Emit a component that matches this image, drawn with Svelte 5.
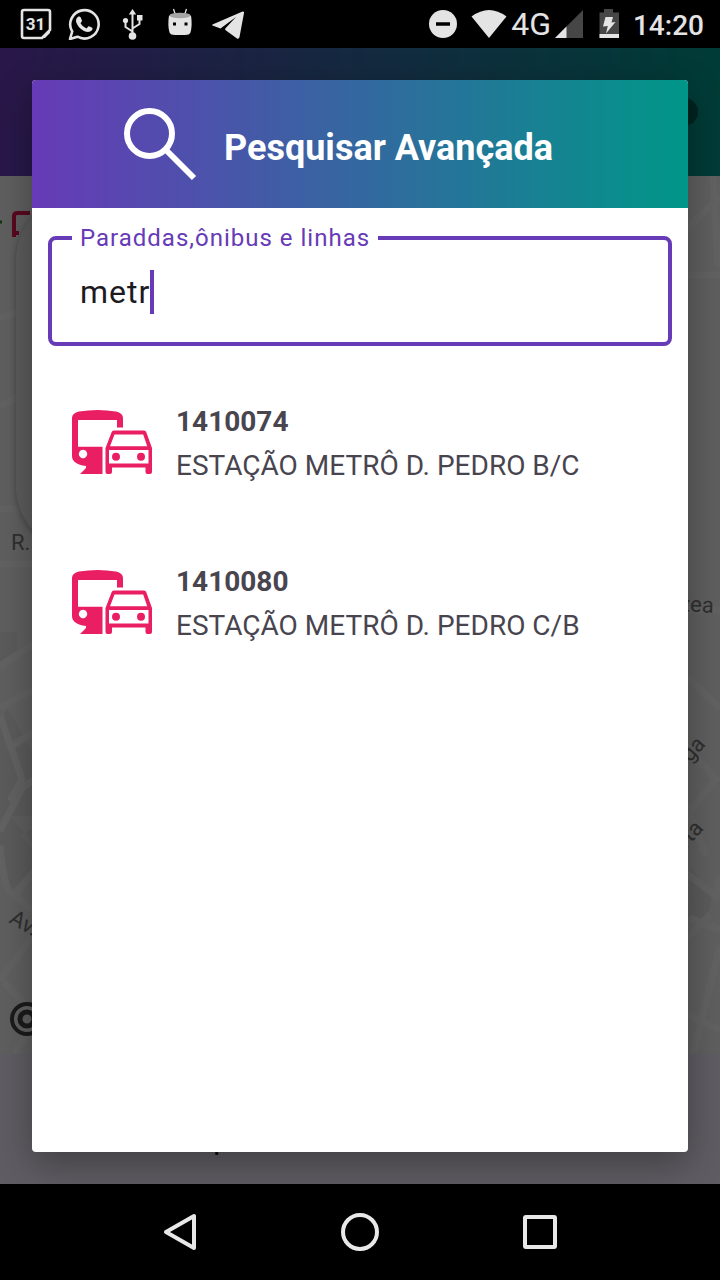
<script>
  let query = $state('metr');
  const stops = [
    { code: '1410074', name: 'ESTAÇÃO METRÔ D. PEDRO B/C' },
    { code: '1410080', name: 'ESTAÇÃO METRÔ D. PEDRO C/B' }
  ];
</script>

<div class="screen">
  <header class="status">
    <div class="notices">
      <svg viewBox="0 0 32 32"><path d="M4 2H28Q30 2 30 4V22L22 30H4Q2 30 2 28V4Q2 2 4 2Z" fill="none" stroke="#e4e4e4" stroke-width="2.6"/><path d="M22 30 30 22V25L25 30Z" fill="#e4e4e4"/><text x="15.500" y="22" text-anchor="middle" class="day">31</text></svg>
      <svg viewBox="0 0 32 32"><path d="M2 31 4.200 23.500A14.200 14.200 0 1 1 9.500 28.700Z" fill="none" stroke="#e4e4e4" stroke-width="2.6" stroke-linejoin="round"/><path d="M10.500 8.500Q12 8 12.700 9.500L14 12.500Q14 13.500 12.500 15.200Q14.500 19 18.500 20.500L20.500 18.200Q21.300 17.800 24.200 19.700Q25 20.500 24 22.300Q21 25.500 16 23Q9.500 19.500 8 13.500Q7.800 10 10.500 8.500Z" fill="#e4e4e4"/></svg>
      <svg viewBox="0 0 32 32"><g fill="none" stroke="#e4e4e4" stroke-width="2"><path d="M16.500 28V5M16.500 23.500 9.500 19V13M16.500 20.500 23.500 16V11"/></g><g fill="#e4e4e4"><path d="M12.800 6.500 16.500 1 20.200 6.500ZM21 7h5.500v5.500H21Z"/><circle cx="9.500" cy="12.500" r="2.600"/><circle cx="16.500" cy="28" r="3.800"/></g></svg>
      <svg viewBox="0 0 32 32"><path d="M9.500 1 11.500 7M22.500 1 20.500 7" stroke="#e4e4e4" stroke-width="1.300"/><path d="M5 7.500Q16 11 27 7.500Q28.500 17 26.500 24.500Q25.500 27 21 27H11Q6.500 27 5.500 24.500Q3.500 17 5 7.500Z" fill="#e4e4e4"/><ellipse cx="16" cy="7.500" rx="10.500" ry="2.700" fill="#a5a5a5"/><path d="M9 14.500h3v3H9ZM20.500 14.500h3v3h-3Z" fill="#000"/></svg>
      <svg viewBox="0 0 32 32"><path d="M.5 16.500Q-.3 17 .5 17.500L8.500 20.500 24 9 13.500 20.200Q12.500 21.500 14 22.500L25 30.500Q27 31.500 27.500 29L32 5Q32.300 3 30 3.700Z" fill="#e4e4e4"/></svg>
    </div>
    <div class="system">
      <svg class="dnd" viewBox="0 0 28 28"><circle cx="14" cy="14" r="14" fill="#e4e4e4"/><path d="M7 14H21" stroke="#000" stroke-width="3.500"/></svg>
      <svg class="wifi" viewBox="0 0 36 28"><path d="M.5 6.500Q18-6.500 35.500 6.500L18 28Z" fill="#e4e4e4"/></svg>
      <span class="network">4G</span>
      <svg class="signal" viewBox="0 0 28 28"><path d="M28 0V28H0Z" fill="#464646"/><path d="M11.500 16.500V28H0Z" fill="#e4e4e4"/></svg>
      <svg class="battery" viewBox="0 0 20 30"><path d="M5 0h9v3.500h6V29H.5V3.500H5Z" fill="#464646"/><path d="M.5 25H20v4H.5Z" fill="#e4e4e4"/><path d="M6.500 8H14L12.500 13.500 16.500 13 7 24.500 8.800 17 4 17.500Z" fill="#e4e4e4"/></svg>
      <time>14:20</time>
    </div>
  </header>

  <main>
    <div class="behind" aria-hidden="true">
      <div class="appbar"><span class="dot"></span></div>
      <div class="map">
        <svg viewBox="0 0 720 878" preserveAspectRatio="none">
          <g fill="#e4e4e4"><path d="M0 456 17 456V480L0 489ZM8 533 34 580V652L0 672V542ZM34 640 10 640 34 668ZM0 656Q28 650 40 696L12 718 0 700Z"/><path d="M690 690 712 723 706 745 688 740Z"/></g>
          <g fill="none" stroke="#f4f4f4" stroke-width="7"><path d="M0 142 40 130M0 230 34 214M0 333H36M0 388H36M0 490 40 464M0 540 22 603 10 625M0 532 40 510M12 570 40 552M0 655 22 612 40 600M0 669Q4 718 14 718L40 690M14 718 40 742M0 804 40 750M4 806 34 838M14 878 34 846"/><path d="M686 54 720 20M684 99H720M713 0 718 90M686 434H720M686 500 720 532M686 570 716 603 686 640M686 628 706 680M686 697 716 720 720 700M710 738 688 762M690 742 720 754M720 770 693 878M686 838 720 854"/></g>
          <path d="M0 46h2" stroke="#2f7a2f" stroke-width="3"/>
          <path d="M14 61V40Q14 37 18 37H30M17 59V55" fill="none" stroke="#dc174d" stroke-width="4"/>
          <g class="streets"><text x="11" y="374">R.</text><text transform="translate(679 435) rotate(3)">zea</text><text transform="translate(690 587) rotate(-48)">ga</text><text transform="translate(686 673) rotate(-48)">rta</text><text transform="translate(8 746) rotate(30)">Av.</text></g>
          <g fill="none" stroke="#444"><circle cx="27" cy="843" r="15" stroke-width="4"/><circle cx="27" cy="843" r="7" stroke-width="5"/></g>
        </svg>
        <div class="panel"></div>
      </div>
      <div class="tabs"><span>Mapa</span><span>Sobre</span></div>
    </div>

    <div class="scrim">
      <section class="dialog" role="dialog" aria-labelledby="title">
        <div class="title">
          <svg viewBox="0 0 96 96"><g fill="none" stroke="#fff" stroke-width="6"><circle cx="37.500" cy="37.500" r="22.500"/><path d="M53 53 82 82"/></g></svg>
          <h1 id="title">Pesquisar Avançada</h1>
        </div>
        <div class="body">
          <fieldset>
            <legend><label for="query">Paraddas,ônibus e linhas</label></legend>
            <div class="entry">
              <input id="query" type="text" autocomplete="off" spellcheck="false" bind:value={query} />
              <span class="caret"></span>
            </div>
          </fieldset>
          <ul>
            {#each stops as stop}
              <li>
                <button type="button">
                  <svg viewBox="0 0 80 64"><g fill="#e91e63" fill-rule="evenodd"><path d="M0 8Q0 3 7 1.500Q26-1.500 44 1.500Q51 3 51 8V17.500H45V10H6V36.700H30.500V64H8L14 58V56Q0 54 0 46ZM11 39.800a4.200 4.200 0 1 0 .01 0Z"/><path d="M33.500 38 39.500 22.500Q40 20.500 42 20.500H72Q73.800 20.500 74.400 22.500L80 38V62Q80 64 78 64H75.500Q73.500 64 73.500 62V57.500H40V62Q40 64 38 64H35.500Q33.500 64 33.500 62ZM42.500 24.500 38 36.200H75.200L71.200 24.500ZM37 40V53.500H76.500V40Z"/><circle cx="44" cy="46.700" r="4"/><circle cx="69" cy="46.700" r="4"/></g></svg>
                  <span class="stop"><strong>{stop.code}</strong><span>{stop.name}</span></span>
                </button>
              </li>
            {/each}
          </ul>
        </div>
      </section>
    </div>
  </main>

  <nav>
    <button type="button" aria-label="Voltar"><svg viewBox="0 0 40 40"><path d="M34 4V36L6 20Z"/></svg></button>
    <button type="button" aria-label="Início"><svg viewBox="0 0 40 40"><circle cx="20" cy="20" r="17"/></svg></button>
    <button type="button" aria-label="Recentes"><svg viewBox="0 0 40 40"><rect x="5" y="5" width="30" height="30" rx="1"/></svg></button>
  </nav>
</div>

<style>
  :global(body) { margin: 0; background: #000; }
  .screen { display: grid; grid-template-rows: 48px 1fr 96px; min-height: 100vh; font-family: Roboto, sans-serif; background: #000; }
  svg { display: block; flex: none; }
  button { font: inherit; color: inherit; background: none; border: 0; padding: 0; cursor: pointer; }

  .status { display: flex; justify-content: space-between; align-items: center; padding: 0 16px 0 20px; color: #e4e4e4; }
  .notices { display: flex; gap: 16px; }
  .notices svg { width: 32px; height: 32px; }
  .day { font: 700 17px Roboto, sans-serif; fill: #e4e4e4; }
  .system { display: flex; align-items: center; }
  .dnd { width: 28px; height: 28px; margin-right: 14px; }
  .wifi { width: 36px; height: 28px; margin-right: 4px; }
  .network { font-size: 32px; line-height: 48px; margin-right: 4px; }
  .signal { width: 28px; height: 28px; margin-right: 16px; }
  .battery { width: 20px; height: 30px; margin-right: 14px; }
  time { padding-top: 4px; font-size: 28px; line-height: 44px; font-weight: 500; }

  main { display: grid; }
  .behind, .scrim { grid-area: 1 / 1; min-width: 0; }
  .behind { display: grid; grid-template-rows: 128px 1fr 130px; }
  .appbar { display: flex; align-items: center; justify-content: flex-end; padding-right: 22px; background: linear-gradient(90deg, #673ab7, #009688); }
  .dot { width: 28px; height: 28px; border-radius: 50%; background: #005a52; }
  .map { position: relative; overflow: hidden; background: #ededed; }
  .map svg { position: absolute; inset: 0; width: 100%; height: 100%; }
  .streets { font: 22px Roboto, sans-serif; fill: #777; }
  .panel { position: absolute; inset: 20px 48px auto 16px; height: 355px; border-radius: 64px; background: #e6e6e6; box-shadow: 0 2px 6px rgba(0, 0, 0, .3); }
  .tabs { display: grid; grid-template-columns: 1fr 1fr; align-items: end; padding: 0 0 28px 40px; background: #eee6f7; text-align: center; font-size: 24px; line-height: 28px; font-weight: 500; color: #222; }
  .scrim { z-index: 1; display: grid; padding: 32px; background: rgba(0, 0, 0, .6); overflow: hidden; }

  .dialog { display: flex; flex-direction: column; overflow: hidden; border-radius: 4px; background: #fff; box-shadow: 0 12px 36px rgba(0, 0, 0, .32); }
  .title { display: flex; align-items: center; gap: 16px; height: 128px; padding-left: 80px; background: linear-gradient(90deg, #673ab7, #009688); color: #fff; }
  .title svg { width: 96px; height: 96px; }
  h1 { margin: 0; padding-top: 8px; font-size: 36px; line-height: 44px; font-weight: 700; }
  .body { padding: 16px; }
  fieldset { min-width: 0; margin: 0; padding: 0 28px 28px; border: 4px solid #673ab7; border-radius: 8px; }
  legend { margin-left: -8px; padding: 0 8px; font-size: 24px; line-height: 28px; letter-spacing: 1px; color: #673ab7; }
  .entry { display: flex; align-items: center; padding-top: 18px; }
  input { field-sizing: content; min-width: 4px; max-width: 100%; padding: 0; border: 0; outline: 0; background: none; font: 32px/44px Roboto, sans-serif; letter-spacing: 1px; color: #1c1b1f; caret-color: transparent; }
  .caret { flex: none; width: 4px; height: 44px; background: #673ab7; }
  ul { margin: 16px 0 0; padding: 0; list-style: none; }
  li button { display: flex; align-items: center; gap: 24px; width: 100%; height: 160px; padding: 0 24px; text-align: left; color: #49454f; }
  li svg { width: 80px; height: 64px; }
  .stop { display: grid; padding-top: 4px; font-size: 28px; line-height: 44px; }

  nav { display: flex; justify-content: center; gap: 140px; }
  nav button { display: grid; place-items: center; width: 40px; }
  nav svg { width: 40px; height: 40px; fill: none; stroke: #e8e8e8; stroke-width: 4; stroke-linejoin: round; }
</style>
